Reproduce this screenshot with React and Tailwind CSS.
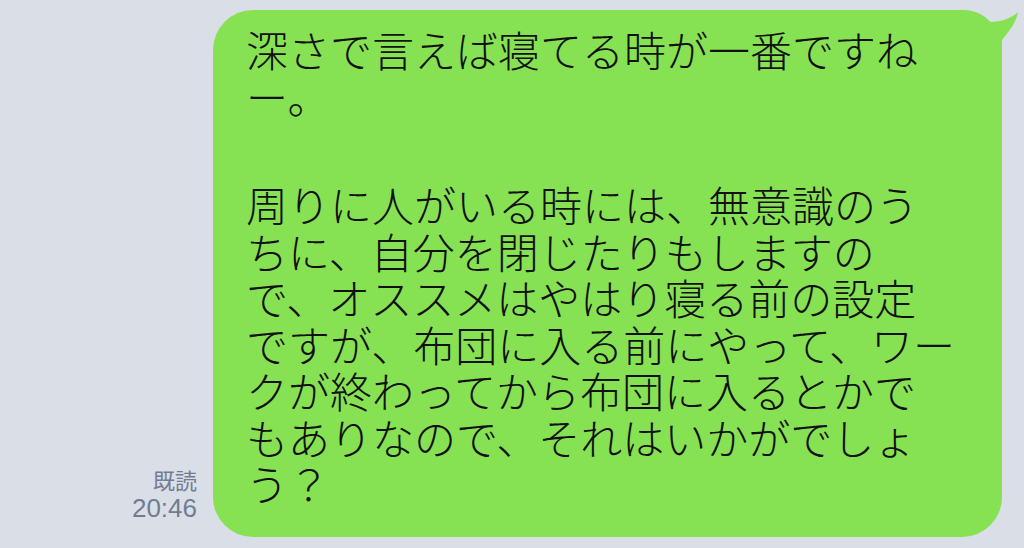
const lines = [
  '深さで言えば寝てる時が一番ですね',
  'ー。',
  null,
  '周りに人がいる時には、無意識のう',
  'ちに、自分を閉じたりもしますの',
  'で、オススメはやはり寝る前の設定',
  'ですが、布団に入る前にやって、ワー',
  'クが終わってから布団に入るとかで',
  'もありなので、それはいかがでしょ',
  'う？',
];

function Tail() {
  return (
    <svg
      className="absolute right-[-22px] top-[-10px]"
      width="74"
      height="70"
      viewBox="0 0 74 70"
    >
      <path
        d="M0,10 L10,10 C25,10 33,14 40,22 C51,22 62,18 68,12 C66,24 58,32 52,40 L52,70 L0,70 Z"
        fill="#87e253"
      />
    </svg>
  );
}

export default function App() {
  return (
    <div
      className="flex h-[548px] w-[1024px] items-end justify-end gap-4 bg-[#dadee6] pb-[12px] pr-[22px] pt-[10px]"
      style={{ fontFamily: '"Noto Sans CJK JP", "Noto Sans", sans-serif' }}
    >
      <div className="mb-[12px] flex flex-col items-end text-[#717c93]">
        <span className="text-[22px] leading-[26px]">既読</span>
        <span className="text-[26px] leading-[32px]" style={{ fontFamily: '"Liberation Sans", sans-serif' }}>
          20:46
        </span>
      </div>
      <div className="relative w-[789px] self-start rounded-[40px] bg-[#87e253] pb-[30px] pl-[33px] pr-4 pt-[16px] text-[42px] font-light leading-[46.5px] text-[#111]">
        <Tail />
        {lines.map((l, i) =>
          l === null ? (
            <div key={i} className="h-[62px]" />
          ) : (
            <div key={i} className="relative whitespace-nowrap">
              {l}
            </div>
          ),
        )}
      </div>
    </div>
  );
}
